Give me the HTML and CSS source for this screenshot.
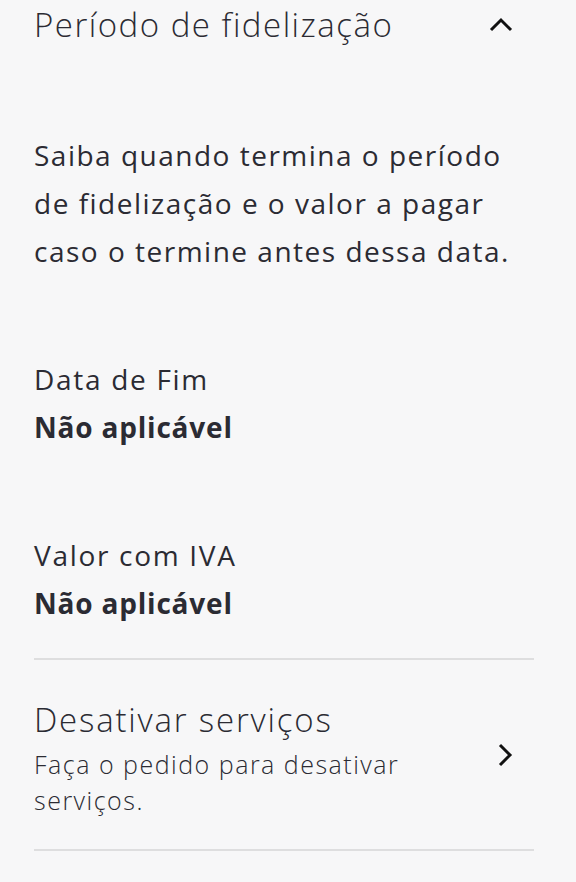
FILE: index.html
```html
<!DOCTYPE html>
<html lang="pt">
<head>
    <meta charset="UTF-8">
    <title>Período de fidelização</title>
    <link rel="stylesheet" href="styles.css">
</head>
<body>
<div id="page">
    <div class="head">
        <span class="head-title">Período de fidelização</span>
        <svg class="chev-up" width="24" height="16" viewBox="0 0 24 16">
            <path d="M2 13 L12 3 L22 13" fill="none" stroke="#111" stroke-width="3"/>
        </svg>
    </div>

    <p class="desc">Saiba quando termina o período de fidelização e o valor a pagar caso o termine antes dessa data.</p>

    <div class="info">
        <div class="info-label">Data de Fim</div>
        <div class="info-value">Não aplicável</div>
    </div>

    <div class="info">
        <div class="info-label">Valor com IVA</div>
        <div class="info-value">Não aplicável</div>
    </div>

    <div class="row">
        <div class="row-text">
            <div class="row-title">Desativar serviços</div>
            <div class="row-sub">Faça o pedido para desativar serviços.</div>
        </div>
        <svg class="chev-right" width="16" height="26" viewBox="0 0 16 26">
            <path d="M3 2 L13 12 L3 22" fill="none" stroke="#111" stroke-width="3"/>
        </svg>
    </div>
</div>
</body>
</html>
```

FILE: styles.css
```css
html, body{
    margin: 0;
    background: #f7f7f8;
}
#page{
    padding: 0 42px 0 34px;
    font-family: "Open Sans", "Noto Sans", sans-serif;
    color: #2b2b33;
}
.head{
    display: flex;
    justify-content: space-between;
    align-items: center;
    height: 50px;
    padding-right: 21px;
}
.head-title{
    font-size: 33px;
    font-weight: 300;
    line-height: 50px;
    letter-spacing: 1.5px;
}
.chev-up{
    display: block;
}
.desc{
    margin: 81px 0 0 0;
    font-size: 28px;
    line-height: 48px;
    letter-spacing: 1.5px;
}
.info{
    margin-top: 80px;
    font-size: 28px;
    line-height: 48px;
}
.info-label{
    font-weight: 400;
    letter-spacing: 1.7px;
}
.info-value{
    font-weight: 700;
    letter-spacing: 0.8px;
}
.row{
    display: flex;
    align-items: center;
    margin-top: 31px;
    padding: 34px 21px 31px 0;
    border-top: 2px solid #dededf;
    border-bottom: 2px solid #dededf;
}
.row-text{
    flex: 1;
    margin-right: 40px;
}
.row-title{
    font-size: 33px;
    font-weight: 300;
    line-height: 52px;
    letter-spacing: 1.8px;
}
.row-sub{
    max-width: 420px;
    font-size: 25px;
    font-weight: 300;
    line-height: 36px;
    letter-spacing: 1.5px;
}
.chev-right{
    display: block;
}
```
